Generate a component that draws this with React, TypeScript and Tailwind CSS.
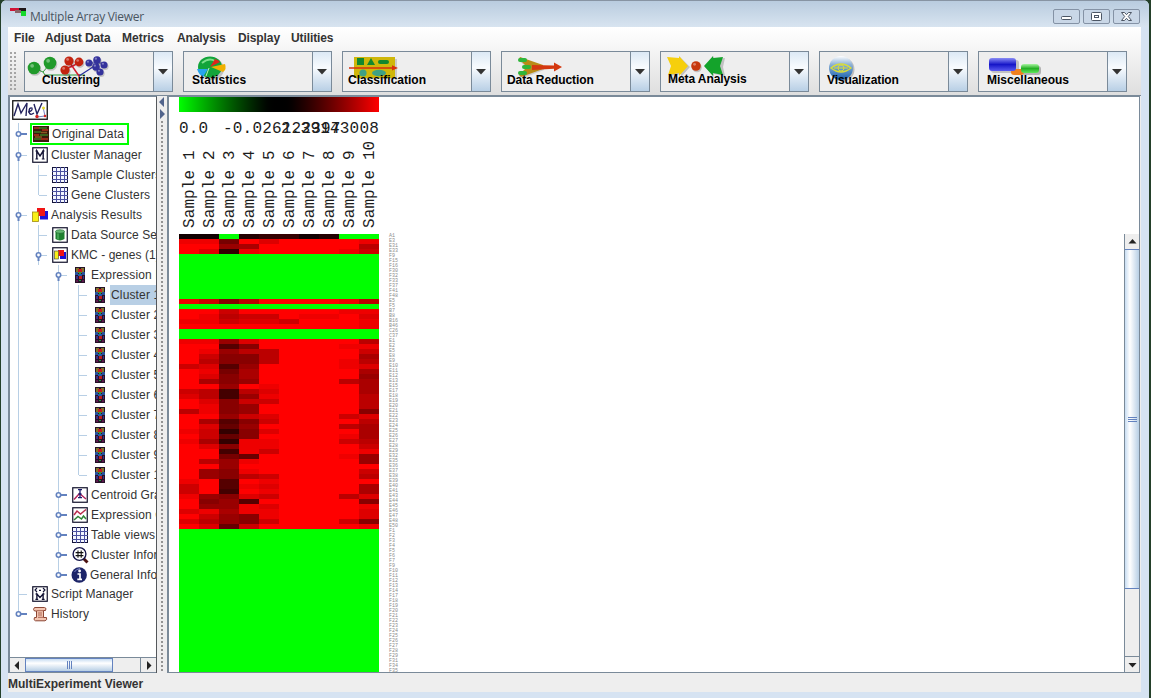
import React from "react";

/* ---------- Toolbar ---------- */

const Ball = ({ x, y, r, c }: { x: number; y: number; r: number; c: string }) => (
  <g>
    <circle cx={x + 1} cy={y + 1.5} r={r} fill="#00000030" />
    <circle cx={x} cy={y} r={r} fill={c} />
    <circle cx={x - r * 0.3} cy={y - r * 0.35} r={r * 0.3} fill="#ffffff60" />
  </g>
);

const ClusteringArt = () => (
  <>
    <path d="M9 16 L18 20 L24 13 M18 20 L20 23 H60" stroke="#2f9a3a" strokeWidth="1" fill="none" />
    <path d="M45 11 L54 24 L54 22 M40 17 L48 14 L53 11" stroke="#d42030" strokeWidth="1.5" fill="none" />
    <path d="M54 24 L71 13 M65 11 L80 11 M71 6 L74 19" stroke="#2b2f9e" strokeWidth="1.2" fill="none" />
    <Ball x={9} y={16} r={6.3} c="#219a2b" />
    <Ball x={25} y={11} r={6.3} c="#219a2b" />
    <Ball x={44} y={9} r={4.6} c="#c3230f" />
    <Ball x={54} y={10} r={4.4} c="#c3230f" />
    <Ball x={40} y={18} r={4.6} c="#c3230f" />
    <Ball x={64} y={11} r={3.6} c="#34329c" />
    <Ball x={72} y={8} r={3.8} c="#34329c" />
    <Ball x={79} y={13} r={3.6} c="#34329c" />
    <Ball x={71} y={15} r={3.8} c="#34329c" />
    <Ball x={75} y={20} r={3.6} c="#34329c" />
  </>
);

const StatisticsArt = () => (
  <>
    <ellipse cx="28" cy="17" rx="12" ry="11" fill="#00000030" />
    <ellipse cx="26" cy="15" rx="12" ry="10.5" fill="#12a43a" />
    <path d="M18 11 Q25 5 31 9" stroke="#7be08b" strokeWidth="2" fill="none" />
    <path d="M26 15 L31 7 Q34 8 36 10 Z" fill="#e0231c" />
    <path d="M27 15 L41 12 Q43 17 39 20 Z" fill="#f0b000" />
    <path d="M13 17 L24 17 L19 25 Q15 23 13 17Z" fill="#27a5ec" />
    <path d="M25 16 L22 24" stroke="#b9efc4" strokeWidth="1" />
  </>
);

const ClassificationArt = () => (
  <>
    <rect x="13" y="7" width="41" height="20" fill="#00000025" />
    <rect x="11" y="5" width="41" height="21" fill="#cfb70a" />
    <rect x="14" y="6" width="7" height="7" fill="#13872e" />
    <path d="M24 13 L28 6 L32 13Z" fill="#13872e" />
    <rect x="35" y="8" width="11" height="4" rx="2" fill="#13872e" />
    <path d="M6 15.3 H49 V13.3 L55 16 L49 18.5 V16.7 H6Z" fill="#d8300e" />
    <circle cx="20" cy="21" r="3.6" fill="#3fa184" />
    <ellipse cx="36" cy="21" rx="7" ry="3.2" fill="#3fa184" />
  </>
);

const ReductionArt = () => (
  <>
    <path d="M20 7 L42 14 L42 18 L21 26 L17 24 L26 16 L17 9Z" fill="#00000025" />
    <path d="M18 5 L41 13 L41 17 L19 25 L17 23 L25 15 L17 7Z" fill="#b98b16" />
    <rect x="16" y="6" width="9" height="4" rx="2" fill="#2fb53a" />
    <rect x="20" y="13" width="9" height="4" rx="2" fill="#2fb53a" />
    <rect x="16" y="19" width="9" height="4" rx="2" fill="#2fb53a" />
    <path d="M30 13 L52 13.5 V10.5 L60 15 L52 19.5 V16.8 L30 18Z" fill="#d4380f" />
  </>
);

const MetaArt = () => (
  <>
    <path d="M8 7 L19 8 V5 L29 15 L20 25 V22 L9 24 L12 15Z" fill="#00000030" />
    <path d="M6 5 L18 6 V4 L27 14 L18 24 V21 L7 23 L10 14Z" fill="#f6cf0c" />
    <Ball x={35} y={14} r={4.8} c="#c7370d" />
    <path d="M64 6 L53 7 V4 L44 15 L53 25 V22 L64 24 L62 15Z" fill="#00000030" />
    <path d="M62 5 L52 6 V4 L43 14 L52 24 V21 L62 23 L59 14Z" fill="#14a32b" />
  </>
);

const VisualizationArt = () => (
  <>
    <defs>
      <linearGradient id="orb" x1="0" y1="0" x2="0" y2="1">
        <stop offset="0" stopColor="#ffffff" />
        <stop offset="0.35" stopColor="#8fb2d6" />
        <stop offset="1" stopColor="#155fae" />
      </linearGradient>
    </defs>
    <circle cx="22.5" cy="17.5" r="12" fill="#00000035" />
    <circle cx="21" cy="16" r="12" fill="url(#orb)" />
    <path d="M11 16 Q21 8 31 16 Q21 24 11 16Z" stroke="#d8dc3a" strokeWidth="1.4" fill="none" />
    <circle cx="21" cy="16" r="3" stroke="#d8dc3a" strokeWidth="1" fill="none" />
    <path d="M14 16 H28" stroke="#d8dc3a" strokeWidth="1" />
  </>
);

const MiscArt = () => (
  <>
    <defs>
      <linearGradient id="bl" x1="0" y1="0" x2="0" y2="1">
        <stop offset="0" stopColor="#8a8cf5" />
        <stop offset="0.5" stopColor="#1616c8" />
        <stop offset="1" stopColor="#5a5af0" />
      </linearGradient>
      <linearGradient id="gr" x1="0" y1="0" x2="0" y2="1">
        <stop offset="0" stopColor="#a8f5a0" />
        <stop offset="0.5" stopColor="#25b025" />
        <stop offset="1" stopColor="#5de85a" />
      </linearGradient>
    </defs>
    <rect x="12" y="8" width="28" height="13" rx="3" fill="#00000030" />
    <rect x="43" y="14" width="19" height="9" rx="3" fill="#00000040" />
    <rect x="32" y="17" width="13" height="6" rx="3" fill="#f0801e" />
    <rect x="10" y="6" width="27" height="13" rx="3" fill="url(#bl)" />
    <rect x="42" y="12" width="18" height="9" rx="3" fill="url(#gr)" />
  </>
);

const tools: { name: string; art: React.ReactNode; pad: string }[] = [
  { name: "Clustering", art: <ClusteringArt />, pad: "pl-[17px] pt-[20px] tracking-[-0.15px]" },
  { name: "Statistics", art: <StatisticsArt />, pad: "pl-[8px] pt-[20px] tracking-[0.1px]" },
  { name: "Classification", art: <ClassificationArt />, pad: "pl-[5px] pt-[20px]" },
  { name: "Data Reduction", art: <ReductionArt />, pad: "pl-[5px] pt-[20px] tracking-[-0.1px]" },
  { name: "Meta Analysis", art: <MetaArt />, pad: "pl-[7px] pt-[19px] tracking-[-0.08px]" },
  { name: "Visualization", art: <VisualizationArt />, pad: "pl-[7px] pt-[20px] tracking-[-0.1px]" },
  { name: "Miscellaneous", art: <MiscArt />, pad: "pl-[8px] pt-[20px]" },
];

const Tool = ({ name, art, pad }: { name: string; art: React.ReactNode; pad: string }) => (
  <button className="flex h-[41px] w-[149px] shrink-0 border border-[#7a8a99] bg-[#eeeeee] text-left">
    <span className={`relative h-full w-[128px] ${pad}`}>
      <svg className="absolute left-0 top-0" width="128" height="39">{art}</svg>
      <span className="relative block whitespace-nowrap text-[12px] leading-4 font-bold text-black">{name}</span>
    </span>
    <span className="flex h-full w-[19px] items-center justify-center border-l border-[#7a8a99] bg-linear-to-b from-[#dce9f5] via-[#f8fbfe] via-40% to-[#b8cfe5]">
      <svg width="10" height="6" className="mt-px"><path d="M0 0H10L5 5.5Z" fill="#333" /></svg>
    </span>
  </button>
);

/* ---------- Tree ---------- */

const Guide = ({ kind, h }: { kind: string; h: number }) => {
  const c = Math.round(h / 2);
  const line = "#b8cfe5";
  return (
    <svg width="20" height={h} className="shrink-0">
      {"vtopq".includes(kind) && <path d={`M9.5 0V${h}`} stroke={line} />}
      {"le".includes(kind) && <path d={`M9.5 0V${c}`} stroke={line} />}
      {kind === "s" && <path d={`M9.5 0V${h}`} stroke={line} />}
      {"tlpq".includes(kind) && <path d={`M10 ${c + 0.5}H18`} stroke={line} />}
      {"oes".includes(kind) && (
        <g>
          <path d={`M11 ${c}H18`} stroke="#6382bf" strokeWidth="2" />
          <circle cx="9.5" cy={c} r="2.2" fill="#fff" stroke="#6382bf" strokeWidth="1.6" />
        </g>
      )}
      {"pq".includes(kind) && (
        <g>
          <path d={`M9.5 ${c}V${c + 6}`} stroke="#6382bf" strokeWidth="2" />
          <circle cx="9.5" cy={c} r="2.2" fill="#fff" stroke="#6382bf" strokeWidth="1.6" />
        </g>
      )}
    </svg>
  );
};

const box = <rect x="0.75" y="0.75" width="14.5" height="14.5" fill="#fff" stroke="#10102a" strokeWidth="1.2" />;

const HeatIcon = () => (
  <>
    <rect x="0" y="0" width="16" height="16" fill="#3b1a0c" />
    <path d="M1 2H7M9 4H15M1 9H6M8 13H15" stroke="#b5321b" strokeWidth="1.6" />
    <path d="M6 2H14M1 6H8M7 9H15M1 13H8" stroke="#3d7c23" strokeWidth="1.6" />
    <path d="M8 6.5H14M2 11H9" stroke="#8a5a22" strokeWidth="1.4" />
  </>
);
const ManagerIcon = () => (
  <>
    {box}
    <path d="M3.4 4H5.6M10.4 4H12.6M3.4 12H6.2M9.8 12H12.6" stroke="#111133" strokeWidth="1.2" />
    <path d="M4.8 12V4L8 9L11.2 4V12" stroke="#111133" strokeWidth="1.4" fill="none" />
  </>
);
const GridIcon = () => (
  <>
    <rect x="0.5" y="0.5" width="15" height="15" fill="#f2f5ff" stroke="#15153c" />
    <path d="M4.5 0V16M8.5 0V16M12.5 0V16M0 4.5H16M0 8.5H16M0 12.5H16" stroke="#4a50a0" strokeWidth="1" />
  </>
);
const ResultsIcon = () => (
  <>
    <rect x="8" y="4" width="8" height="8.5" fill="#1c10d8" />
    <rect x="5" y="1" width="8" height="8" fill="#f01414" />
    <rect x="0.5" y="5" width="6" height="9.5" fill="#f8ef16" stroke="#a08a10" strokeWidth="0.8" />
  </>
);
const KmcIcon = () => (
  <>
    {box}
    <rect x="8" y="5" width="6" height="7" fill="#1c10d8" />
    <rect x="6" y="3" width="6" height="6" fill="#f01414" />
    <rect x="2.5" y="4" width="4" height="8" fill="#f8ef16" stroke="#554" strokeWidth="0.7" />
  </>
);
const SourceIcon = () => (
  <>
    {box}
    <path d="M3.5 4.5V12Q8 14.8 12.5 12V4.5Z" fill="#1e8030" />
    <path d="M6 5V12.5" stroke="#4fae5f" strokeWidth="1.5" />
    <ellipse cx="8" cy="4.5" rx="4.5" ry="1.8" fill="#65b873" stroke="#17602a" strokeWidth="0.6" />
  </>
);
const ExprIcon = () => (
  <>
    <rect x="3" y="0" width="10" height="16" fill="#251228" />
    <rect x="4" y="1" width="3" height="5" fill="#80742a" />
    <rect x="9" y="1" width="3" height="5" fill="#80742a" />
    <rect x="6" y="2" width="4" height="3" fill="#c11f1f" />
    <rect x="3" y="5" width="3" height="3" fill="#28509a" />
    <rect x="10" y="5" width="3" height="3" fill="#28509a" />
    <rect x="7" y="5" width="2" height="2" fill="#269a45" />
    <rect x="6" y="7" width="4" height="2" fill="#2458a8" />
    <rect x="7" y="9" width="3" height="3" fill="#c11f1f" />
    <rect x="4" y="9" width="2" height="3" fill="#3c2a88" />
    <rect x="11" y="9" width="1" height="3" fill="#3c2a88" />
    <rect x="7" y="13" width="2" height="1" fill="#269a45" />
    <rect x="4" y="13" width="2" height="2" fill="#5b1a4c" />
    <rect x="10" y="13" width="2" height="2" fill="#5b1a4c" />
  </>
);
const CentroidIcon = () => (
  <>
    {box}
    <path d="M2 12.5L7.5 6.5L14 12" stroke="#b0245c" strokeWidth="1.5" fill="none" />
    <path d="M8 2V11M6 2.6H10M6.5 7H9.5M6 10.7H10" stroke="#1a1a6a" strokeWidth="1.3" />
  </>
);
const GraphIcon = () => (
  <>
    {box}
    <path d="M2 8L5 4L8.5 7L14 2.5" stroke="#b82c4c" strokeWidth="1.5" fill="none" />
    <path d="M2 13L6 9.5L9.5 12L11.5 9L14 12" stroke="#2f8536" strokeWidth="1.5" fill="none" />
  </>
);
const LensIcon = () => (
  <>
    <path d="M11.5 11.5L15.5 15.5" stroke="#4a1010" strokeWidth="3" />
    <circle cx="7.5" cy="7" r="6.4" fill="#fff" stroke="#15154a" strokeWidth="1.4" />
    <path d="M6 3.4V10.8M9.2 3.4V10.8M3.6 5.6H11.4M3.6 8.6H11.4" stroke="#111" strokeWidth="1.1" />
  </>
);
const InfoIcon = () => (
  <>
    <circle cx="7.2" cy="8" r="7.7" fill="#1c2468" />
    <path d="M2.5 5Q4 2 8 1.5" stroke="#7b86c8" strokeWidth="1" fill="none" />
    <circle cx="7.6" cy="4" r="1.4" fill="#fff" />
    <path d="M5.5 7H8V12M5.3 12.3H10" stroke="#fff" strokeWidth="1.7" fill="none" />
  </>
);
const ScriptIcon = () => (
  <>
    {box}
    <path d="M5 2L3 4L5 6M11 2L13 4L11 6M7 4.4H9" stroke="#111133" strokeWidth="1.1" fill="none" />
    <path d="M3.4 8H5.4M10.6 8H12.6M3.4 13.4H6.2M9.8 13.4H12.6" stroke="#111133" strokeWidth="1.1" />
    <path d="M4.9 13V8L8 11.4L11.1 8V13" stroke="#111133" strokeWidth="1.4" fill="none" />
  </>
);
const HistoryIcon = () => (
  <>
    <path d="M2.5 1.5H12.5Q15 2 13.5 4.5H11.5V11.5H14.5Q15.5 14 13 14.8H3.5Q1 14 2.5 11.5H4.5V5H2.5Q0.5 3.5 2.5 1.5Z" fill="#f3c6b2" stroke="#8c4634" />
    <path d="M4.5 4.7H11.5M6 7H10M6 9H10M6 11.3H11.5" stroke="#a35a48" strokeWidth="0.9" />
  </>
);

type Node = { g: string; h?: number; icon: React.ReactNode; label: string; state?: "outlined" | "selected"; cls?: string };

const nodes: Node[] = [
  { g: "s", h: 22, icon: <HeatIcon />, label: "Original Data", state: "outlined", cls: "tracking-[0.15px]" },
  { g: "p", icon: <ManagerIcon />, label: "Cluster Manager", cls: "tracking-[0.15px]" },
  { g: "vt", icon: <GridIcon />, label: "Sample Clusters", cls: "tracking-[0.15px]" },
  { g: "vl", icon: <GridIcon />, label: "Gene Clusters", cls: "tracking-[0.2px]" },
  { g: "p", icon: <ResultsIcon />, label: "Analysis Results", cls: "tracking-[0.2px]" },
  { g: "vt", icon: <SourceIcon />, label: "Data Source Selection", cls: "tracking-[0.1px]" },
  { g: "vp", icon: <KmcIcon />, label: "KMC - genes (1)", cls: "tracking-[0.05px]" },
  { g: "v p", icon: <ExprIcon />, label: "Expression Images", cls: "tracking-[0.15px]" },
  ...["1", "2", "3", "4", "5", "6", "7", "8", "9", "10"].map((n, i): Node => ({
    g: i === 9 ? "v vl" : "v vt",
    icon: <ExprIcon />,
    label: `Cluster ${n}`,
    state: i === 0 ? "selected" : undefined,
    cls: "tracking-[0.15px]",
  })),
  { g: "v o", icon: <CentroidIcon />, label: "Centroid Graphs", cls: "tracking-[0.1px]" },
  { g: "v o", icon: <GraphIcon />, label: "Expression Graphs", cls: "tracking-[0.15px]" },
  { g: "v o", icon: <GridIcon />, label: "Table views", cls: "tracking-[0.2px]" },
  { g: "v o", icon: <LensIcon />, label: "Cluster Information", cls: "tracking-[0.1px]" },
  { g: "v e", h: 19, icon: <InfoIcon />, label: "General Information", cls: "-ml-[1px] tracking-[0.1px]" },
  { g: "t", icon: <ScriptIcon />, label: "Script Manager", cls: "tracking-[0.07px]" },
  { g: "e", icon: <HistoryIcon />, label: "History", cls: "tracking-[0.1px]" },
];

const TreeRow = ({ g, h = 20, icon, label, state, cls = "" }: Node) => (
  <div className="-ml-px flex items-center" style={{ height: h }}>
    {g.split("").map((k, i) => <Guide key={i} kind={k} h={h} />)}
    <div className={`flex shrink-0 items-center ${state === "outlined" ? "ml-px h-[22px] w-[99px] border-2 border-[#00ff00] pl-px" : "ml-[3px] h-5"}`}>
      <svg width="16" height="16" className="mr-0.5 shrink-0 overflow-visible">{icon}</svg>
      <span className={`flex items-center whitespace-nowrap pl-px ${state === "selected" ? "h-5 w-16 bg-[#b8cfe5]" : ""} ${cls}`}>{label}</span>
    </div>
  </div>
);

const Arrow = ({ d, className }: { d: string; className: string }) => (
  <div className={`flex shrink-0 items-center justify-center bg-[#eeeeee] ${className}`}>
    <svg width="9" height="9"><path d={d} fill="#222" /></svg>
  </div>
);

const Explorer = () => (
  <aside className="flex w-[149px] shrink-0 flex-col overflow-hidden border-t border-l-2 border-r border-[#7a8a99] border-r-[#55585c] bg-white text-[12px] text-[#333]">
    <div className="min-h-0 flex-1 overflow-hidden">
      <div className="h-[26px] pt-[3px] pl-[2px]">
        <svg width="36" height="20">
          <rect x="0.75" y="0.75" width="34.5" height="18.5" fill="#fff" stroke="#111" strokeWidth="1.3" />
          <path d="M2 16L6 4L9 13L15 3L14 16" stroke="#23235e" strokeWidth="1.4" fill="none" />
          <path d="M16 12Q21 11 20 8Q17 7 17 12Q18 16 22 13" stroke="#23235e" strokeWidth="1.3" fill="none" />
          <path d="M22 4L25 14L30 3" stroke="#23235e" strokeWidth="1.4" fill="none" />
          <path d="M31 7L33 16L25 17" stroke="#5560b0" strokeWidth="0.8" fill="none" />
          <circle cx="31.5" cy="8" r="1.5" fill="#e8dc30" />
          <circle cx="25" cy="16.5" r="1.7" fill="#d52323" />
          <circle cx="33" cy="16" r="1.3" fill="#d52323" />
        </svg>
      </div>
      {nodes.map((n, i) => <TreeRow key={i} {...n} />)}
    </div>
    <div className="flex h-4 shrink-0 border-y border-[#7a8a99]">
      <Arrow d="M6 0V9L1.5 4.5Z" className="w-[15px]" />
      <div className="flex w-[88px] items-center justify-center gap-px border border-[#6382bf] bg-linear-to-b from-[#c8ddf2] via-[#ffffff] via-35% to-[#b8cfe5]">
        <i className="h-2 w-px bg-[#6382bf]" />
        <i className="h-2 w-px bg-[#6382bf]" />
        <i className="h-2 w-px bg-[#6382bf]" />
      </div>
      <div className="flex-1 bg-[#eeeeee]" />
      <Arrow d="M3 0V9L7.5 4.5Z" className="w-4 border-l border-[#7a8a99]" />
    </div>
  </aside>
);

/* ---------- Heat map ---------- */

// One character per sample: "g" is pure green, a hex digit is the level of red.
const G = "gggggggggg";
const levels: string[] = [
  "11g23312gg", "ee7fdffffe", "ff9afffffb", "fd3effffec",
  G, G, G, G, G, G, G, G, G,
  "ec8bffffeb", G,
  "ffcfffffee", "febccfeefd", "eecddcfffe", "fffffffffe",
  G, G,
  "ee9dfffffb", "ff58ffffee", "fe9bbffffc", "fc88bffffa", "fb88bfffeb", "cd59ffffed", "fe7afffffa", "fd8afffff9", "fa89ffffba",
  "ff9feffffa", "cb4bdffffa", "db49effffb", "fd8ccffffb", "fe89fffffb", "be89fffff8", "ff9cdfffcd", "fa58cffffb",
  "fd69ffffba", "ec38dffffa", "fc68ffffea", "ea3eefffcb", "fd8eeffffc", "ff4ecffffe", "ff76ffffe9", "fb9efffff9",
  "ff9fffffff", "f98efffffc", "f98bcffffb", "ef5fefffff", "cf5edffffa", "cf4feffffa", "e98dcfffbd", "f895fffff8",
  "f99edffffe", "deaeeffffd", "fc98effffd", "db98cfffc8", "fd6cfffffe",
  ...Array.from({ length: 29 }, () => G),
];

const genes =
  "A1 E3 E31 E33 F9 F15 F16 F30 F32 F33 F37 F41 F48 E5 F5 B7 B8 B16 B46 C26 C37 E1 E2 E5 E8 E9 E10 E11 E12 E13 E15 E17 E18 E19 E20 E21 E22 E23 E24 E25 E26 E27 E28 E29 E32 E35 E36 E37 E38 E39 E40 E41 E43 E44 E45 E46 E47 E48 E50 F1 F2 F3 F4 F5 F6 F7 F9 F10 F11 F12 F13 F14 F17 F18 F19 F20 F21 F22 F23 F24 F25 F26 F27 F28 F29 F31 F34 F35".split(" ");

const cellColor = (ch: string) => (ch === "g" ? "#00ff00" : `rgb(${parseInt(ch, 16) * 17},0,0)`);

const HeatMap = () => (
  <div className="w-[240px] shrink-0 pl-2.5 font-['Liberation_Mono',monospace] text-[#1c1c1c]">
    <div className="h-[15px] w-[200px] bg-linear-to-r from-[#00ff00] via-black to-[#ff0000]" />
    <div className="relative h-[24px] w-[200px] text-[16px] leading-[35px] tracking-[0.2px] whitespace-nowrap">
      <span className="absolute left-0 top-0">0.0</span>
      <span className="absolute left-[44px] top-0">-0.026122397</span>
      <span className="absolute right-0 top-0">2.39143008</span>
    </div>
    <div className="flex h-[98px] w-[200px] pb-[6px] pl-px">
      {Array.from({ length: 10 }, (_, i) => (
        <span key={i} className="w-5 shrink-0 rotate-180 text-[16px] leading-5 tracking-[0.1px] whitespace-nowrap [writing-mode:vertical-rl]">
          Sample {i + 1}
        </span>
      ))}
    </div>
    {levels.map((row, i) => (
      <div key={i} className="flex h-[5px]">
        {row.split("").map((ch, j) => <i key={j} className="h-[5px] w-5" style={{ background: cellColor(ch) }} />)}
        <span className="ml-2.5 text-[5px] leading-[5px] text-[#8c8c8c]">{genes[i]}</span>
      </div>
    ))}
  </div>
);

const Viewer = () => (
  <main className="mr-px flex min-w-0 flex-1 overflow-hidden border-t border-r border-b border-l-2 border-[#7a8a99] bg-white">
    <HeatMap />
    <div className="flex-1" />
    <div className="mt-[137px] flex w-[15px] shrink-0 flex-col border-l border-[#7a8a99]">
      <Arrow d="M0.5 6.5H8.5L4.5 2Z" className="h-[15px]" />
      <div className="flex h-[340px] flex-col items-center justify-center gap-px border border-[#6382bf] border-x-0 bg-linear-to-r from-[#c8ddf2] via-[#ffffff] via-35% to-[#b8cfe5]">
        <i className="h-px w-[9px] bg-[#6382bf]" />
        <i className="h-px w-[9px] bg-[#6382bf]" />
        <i className="h-px w-[9px] bg-[#6382bf]" />
      </div>
      <div className="flex-1 bg-[#eeeeee]" />
      <Arrow d="M0.5 3H8.5L4.5 7.5Z" className="h-4 border-t border-[#7a8a99]" />
    </div>
  </main>
);

/* ---------- Window ---------- */

const WinButton = ({ children }: { children: React.ReactNode }) => (
  <button className="flex h-[15px] w-[27px] items-center justify-center rounded-[2px] border border-[#8492a5] bg-[#c9d7e7]">
    <svg width="13" height="11" fill="#fff" stroke="#4c5665">{children}</svg>
  </button>
);

const menus: [string, string][] = [
  ["File", "w-[31px]"],
  ["Adjust Data", "w-[77px] tracking-[-0.1px]"],
  ["Metrics", "w-[55px]"],
  ["Analysis", "w-[61px] tracking-[-0.1px]"],
  ["Display", "w-[53px] tracking-[-0.1px]"],
  ["Utilities", "w-[60px] tracking-[-0.1px]"],
];

export default function App() {
  return (
    <div className="flex h-[698px] w-[1151px] overflow-hidden bg-[#24402a] font-['Liberation_Sans',Arial,sans-serif]">
      <div className="ml-px flex w-[1148px] flex-col overflow-hidden rounded-t-md bg-[#d6e3f2] pr-2 pl-[7px]">
        <header className="-mr-2 -ml-[7px] flex h-[27px] shrink-0 items-start border-t border-[#8794a3] bg-linear-to-b from-[#b9ccdf] to-[#d8e4f0] pr-[9px] pl-[9px]">
          <svg width="17" height="12" className="mt-[7px]">
            <rect x="0" y="0" width="9" height="3" fill="#d01436" />
            <rect x="9" y="0" width="7" height="3" fill="#1e1618" />
            <rect x="5" y="2" width="6" height="3" fill="#8b6468" />
            <rect x="11" y="3" width="5" height="5" fill="#17d92c" />
          </svg>
          <h1 className="mt-[8px] ml-[3px] flex-1 font-['Open_Sans',sans-serif] text-[12px] leading-4 tracking-[-0.28px] text-[#4a5561]">Multiple Array Viewer</h1>
          <div className="mt-[8px] flex gap-[3px]">
            <WinButton><rect x="1.5" y="5.5" width="10" height="3" rx="1" /></WinButton>
            <WinButton><rect x="1.5" y="1.5" width="10" height="8" rx="1" /><rect x="4.5" y="4.5" width="4" height="2" /></WinButton>
            <WinButton><path d="M1.5 1.5H4.5L6.5 3.7L8.5 1.5H11.5L8.3 5.5L11.5 9.5H8.5L6.5 7.3L4.5 9.5H1.5L4.7 5.5Z" /></WinButton>
          </div>
        </header>

        <div className="flex h-[665px] flex-col bg-[#eeeeee]">
          <nav className="flex h-[21px] shrink-0 items-center bg-linear-to-b from-white to-[#f6f6f6] pl-[6px] text-[12px] font-bold text-[#333]">
            {menus.map(([m, w]) => <span key={m} className={`${w} shrink-0 whitespace-nowrap`}>{m}</span>)}
          </nav>
          <div className="flex h-[47px] shrink-0 items-start gap-[10px] bg-linear-to-b from-[#f6f6f6] to-[#dedede] pt-[3px]">
            <div className="-mr-[3px] ml-px h-[41px] w-[8px] shrink-0 bg-[radial-gradient(#a0a0a0_0.7px,transparent_0.8px)] bg-[size:4px_4px]" />
            {tools.map((t) => <Tool key={t.name} {...t} />)}
          </div>

          <div className="flex h-[578px] shrink-0 border-t border-[#7a8a99]">
            <Explorer />
            <div className="flex w-[10px] shrink-0 flex-col items-center bg-[#eeeeee]">
              <svg width="8" height="24"><path d="M6 1V11L1 6Z M2 13V23L7 18Z" fill="#51648c" /></svg>
              <div className="w-1 flex-1 bg-[radial-gradient(#8c8c8c_0.7px,transparent_0.8px)] bg-[size:4px_4px]" />
            </div>
            <Viewer />
          </div>
          <footer className="flex h-[19px] shrink-0 items-center pb-px text-[12px] font-bold text-[#333]">
            <span className="mt-1">MultiExperiment Viewer</span>
          </footer>
        </div>
      </div>
    </div>
  );
}
